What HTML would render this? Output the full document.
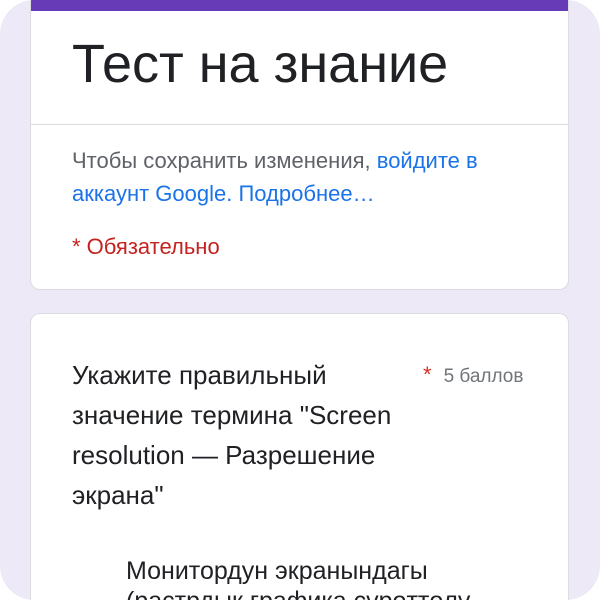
<!DOCTYPE html>
<html><head><meta charset="utf-8"><style>
html,body{margin:0;padding:0;background:#fff;}
.wrap{position:relative;width:600px;height:600px;background:#ede9f7;border-radius:34px;overflow:hidden;font-family:"Liberation Sans",sans-serif;}
.card{position:absolute;left:30px;width:539px;background:#fff;border:1px solid #dadce0;border-radius:10px;overflow:hidden;box-sizing:border-box;}
.c1{top:-12px;height:302px;}
.bar{position:absolute;left:0;top:0;width:100%;height:22px;background:#673ab7;}
.t{position:absolute;left:41px;top:47px;font-size:54px;line-height:56px;color:#202124;white-space:nowrap;}
.hr{position:absolute;left:0;top:135px;width:100%;height:1px;background:#dadce0;}
.s{position:absolute;left:41px;top:155px;font-size:22px;line-height:33px;color:#5f6368;white-space:nowrap;}
.s a{color:#1a73e8;text-decoration:none;}
.r{position:absolute;left:41px;top:243px;font-size:22px;line-height:30px;color:#c5221f;white-space:nowrap;}
.c2{top:313px;height:320px;}
.q{position:absolute;left:41px;top:41px;font-size:26px;line-height:40px;color:#202124;white-space:nowrap;}
.p{position:absolute;left:392px;top:48px;font-size:19px;color:#70757a;white-space:nowrap;}
.p b{color:#d93025;font-weight:normal;font-size:22px;margin-right:12px;}
.o{position:absolute;left:95px;top:242px;font-size:25px;line-height:30px;color:#202124;white-space:nowrap;}
</style></head><body><div class="wrap">
<div class="card c1"><div class="bar"></div>
<div class="t">Тест на знание</div><div class="hr"></div>
<div class="s">Чтобы сохранить изменения, <a>войдите в</a><br><a>аккаунт Google.</a> <a>Подробнее…</a></div>
<div class="r">* Обязательно</div></div>
<div class="card c2">
<div class="q">Укажите правильный<br>значение термина "Screen<br>resolution — Разрешение<br>экрана"</div>
<div class="p"><b>*</b>5 баллов</div>
<div class="o">Монитордун экранындагы<br>(растрдык графика сүрөттөлү</div>
</div>
</div></body></html>
